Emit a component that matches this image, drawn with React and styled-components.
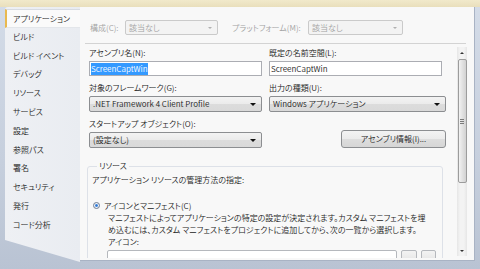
import React from "react";
import styled, { createGlobalStyle } from "styled-components";

const Global = createGlobalStyle`
  html, body { margin: 0; padding: 0; }
  body { font-family: "Noto Sans CJK JP", "Noto Sans", sans-serif; }
  * { box-sizing: border-box; }
`;

const Root = styled.div`
  width: 480px;
  height: 269px;
  overflow: hidden;
  background: linear-gradient(180deg, #d4dce8 0%, #c6cfdd 60%, #b9c3d3 100%);
  font-family: "Noto Sans CJK JP", "Noto Sans", sans-serif;
  font-size: 8px;
  font-weight: 350;
  font-feature-settings: "palt";
  color: #222;
`;

const TopStrip = styled.div`
  height: 7px;
  background: linear-gradient(180deg, #f1e9cb 0%, #e9dfbc 100%);
`;

const Main = styled.div`
  display: flex;
  align-items: flex-start;
  padding-left: 5px;
`;

const TabColumn = styled.div`
  width: 75px;
  height: 255px;
  padding-top: 2px;
  background: linear-gradient(90deg, #eef0f4 0%, #e9ecf1 100%);
  clip-path: polygon(0 0, 100% 0, 100% 100%, 0 91.4%);
  border-top-left-radius: 3px;
`;

const Tab = styled.div`
  height: 18.8px;
  line-height: 18px;
  padding-left: ${(p) => (p.$active ? "6px" : "8px")};
  white-space: nowrap;
  color: #262626;
  ${(p) =>
    p.$active &&
    `
    background: #fafafa;
    border-left: 2px solid #e9b94f;
    border-top: 1px solid #d7dbe2;
    border-bottom: 1px solid #e3e6ea;
  `}
`;

const ContentPanel = styled.div`
  width: 395px;
  height: 254px;
  background: #f8f8f8;
  border-right: 1px solid #a9b3c4;
  border-bottom: 1px solid #a9b3c4;
  display: flex;
  flex-direction: column;
`;

const TopBar = styled.div`
  height: 36px;
  padding: 13px 0 0 10px;
  display: flex;
  align-items: flex-start;
`;

const BarLabel = styled.div`
  width: ${(p) => p.$w}px;
  line-height: 15px;
  color: #a3a3a3;
  white-space: nowrap;
`;

const DisabledCombo = styled.div`
  width: ${(p) => p.$w}px;
  height: 15px;
  margin-right: ${(p) => p.$mr || 0}px;
  border: 1px solid #cacaca;
  border-radius: 2px;
  background: #f3f3f3;
  color: #a3a3a3;
  line-height: 13px;
  padding-left: 3px;
  display: flex;
  justify-content: space-between;
  align-items: center;
`;

const SmallArrow = styled.span`
  width: 0;
  height: 0;
  margin-right: 5px;
  border-left: 2px solid transparent;
  border-right: 2px solid transparent;
  border-top: 2px solid ${(p) => p.$c || "#b0b0b0"};
`;

const Separator = styled.div`
  height: 1px;
  margin: 0 8px 0 5px;
  background: #d3d3d3;
`;

const Body = styled.div`
  flex: 1;
  display: flex;
  min-height: 0;
`;

const FormArea = styled.div`
  width: 377px;
  height: 214px;
  overflow: hidden;
  padding: 4px 0 0 9px;
`;

const FieldGrid = styled.div`
  display: grid;
  grid-template-columns: 173px 177px;
  column-gap: 7px;
  row-gap: 7px;
`;

const Field = styled.div`
  display: flex;
  flex-direction: column;
  gap: 3px;
`;

const Label = styled.div`
  line-height: 10px;
  white-space: nowrap;
`;

const TextInput = styled.div`
  width: ${(p) => p.$w || 173}px;
  height: 15px;
  border: 1px solid #abadb3;
  background: #fff;
  line-height: 12px;
  padding: 1px 0 0 1px;
  white-space: nowrap;
`;

const Selected = styled.span`
  background: #3399ff;
  color: #fff;
  padding: 0 0 1px 0;
`;

const Combo = styled.div`
  width: ${(p) => p.$w || 173}px;
  height: 16px;
  border: 1px solid #8c8e91;
  border-radius: 2px;
  background: linear-gradient(180deg, #f3f3f3 0%, #ebebeb 50%, #dcdcdc 51%, #d9d9d9 100%);
  display: flex;
  align-items: center;
  justify-content: space-between;
  padding-left: 3px;
  line-height: 14px;
  white-space: nowrap;
`;

const BlackArrow = styled.span`
  width: 0;
  height: 0;
  margin-right: 5px;
  border-left: 3px solid transparent;
  border-right: 3px solid transparent;
  border-top: 3px solid #111;
`;

const ButtonCell = styled.div`
  display: flex;
  justify-content: flex-end;
  align-items: flex-end;
`;

const Button = styled.div`
  width: 105px;
  height: 18px;
  border: 1px solid #8c8e91;
  border-radius: 3px;
  background: linear-gradient(180deg, #f3f3f3 0%, #ebebeb 50%, #dddddd 51%, #d6d6d6 100%);
  text-align: center;
  line-height: 16px;
  white-space: nowrap;
`;

const GroupBox = styled.fieldset`
  margin: 13px 0 0 -2px;
  width: 356px;
  border: 1px solid #dde1e8;
  border-radius: 3px;
  padding: 0 0 20px 4px;
  min-width: 0;
`;

const Legend = styled.legend`
  margin-left: 5px;
  padding: 0 2px;
  line-height: 10px;
`;

const GroupText = styled.div`
  margin-top: 4px;
  line-height: 10px;
  white-space: nowrap;
`;

const RadioRow = styled.div`
  margin-top: 15px;
  display: flex;
  align-items: center;
  height: 10px;
  padding-left: 1px;
  white-space: nowrap;
`;

const Radio = styled.span`
  width: 7px;
  height: 7px;
  margin-right: 4px;
  border-radius: 50%;
  border: 1px solid #6d7b91;
  background: radial-gradient(circle, #2f76d0 0%, #4a8ee0 35%, #e9eef5 45%, #f7f9fb 100%);
`;

const Indented = styled.div`
  padding-left: 16px;
`;

const Desc = styled.div`
  margin-top: 2px;
  line-height: 12px;
  white-space: nowrap;
`;

const IconLabel = styled.div`
  margin-top: 1px;
  line-height: 10px;
`;

const IconRow = styled.div`
  margin-top: 3px;
  display: flex;
  gap: 4px;
  margin-left: -1px;
`;

const IconCombo = styled.div`
  width: ${(p) => p.$w}px;
  height: 16px;
  border: 1px solid #b5b8bd;
  border-radius: 2px;
  background: ${(p) => (p.$plain ? "#fff" : "linear-gradient(180deg,#f3f3f3,#e0e0e0)")};
`;

const Scrollbar = styled.div`
  width: 10px;
  height: 209px;
  margin: 3px 7px 0 0;
  background: linear-gradient(90deg, #e6e6e6 0%, #f3f3f3 30%, #f3f3f3 70%, #e6e6e6 100%);
  display: flex;
  flex-direction: column;
  align-items: center;
`;

const ArrowBox = styled.div`
  height: 11px;
  width: 10px;
  display: flex;
  align-items: center;
  justify-content: center;
`;

const UpTri = styled.span`
  width: 0;
  height: 0;
  border-left: 2px solid transparent;
  border-right: 2px solid transparent;
  border-bottom: 2px solid #333;
`;

const DownTri = styled.span`
  width: 0;
  height: 0;
  border-left: 2px solid transparent;
  border-right: 2px solid transparent;
  border-top: 2px solid #333;
`;

const Thumb = styled.div`
  margin-top: 1px;
  width: 9px;
  height: 124px;
  border: 1px solid #9c9c9c;
  border-radius: 2px;
  background: linear-gradient(90deg, #f2f2f2 0%, #e1e1e1 50%, #d2d2d2 100%);
  display: flex;
  align-items: center;
  justify-content: center;
`;

const Grip = styled.div`
  width: 4px;
  height: 5px;
  background: repeating-linear-gradient(180deg, #7a7a7a 0 1px, transparent 1px 2px);
`;

const TrackRest = styled.div`
  flex: 1;
`;

const tabs = [
  "アプリケーション",
  "ビルド",
  "ビルド イベント",
  "デバッグ",
  "リソース",
  "サービス",
  "設定",
  "参照パス",
  "署名",
  "セキュリティ",
  "発行",
  "コード分析",
];

export default function App() {
  return (
    <Root>
      <Global />
      <TopStrip />
      <Main>
        <TabColumn>
          {tabs.map((t, i) => (
            <Tab key={t} $active={i === 0}>
              {t}
            </Tab>
          ))}
        </TabColumn>
        <ContentPanel>
          <TopBar>
            <BarLabel $w={35}>構成(C):</BarLabel>
            <DisabledCombo $w={93} $mr={14}>
              該当なし
              <SmallArrow />
            </DisabledCombo>
            <BarLabel $w={76}>プラットフォーム(M):</BarLabel>
            <DisabledCombo $w={95}>
              該当なし
              <SmallArrow />
            </DisabledCombo>
          </TopBar>
          <Separator />
          <Body>
            <FormArea>
              <FieldGrid>
                <Field>
                  <Label>アセンブリ名(N):</Label>
                  <TextInput>
                    <Selected>ScreenCaptWin</Selected>
                  </TextInput>
                </Field>
                <Field>
                  <Label>既定の名前空間(L):</Label>
                  <TextInput $w={173}>ScreenCaptWin</TextInput>
                </Field>
                <Field>
                  <Label>対象のフレームワーク(G):</Label>
                  <Combo>
                    .NET Framework 4 Client Profile
                    <BlackArrow />
                  </Combo>
                </Field>
                <Field>
                  <Label>出力の種類(U):</Label>
                  <Combo $w={177}>
                    Windows アプリケーション
                    <BlackArrow />
                  </Combo>
                </Field>
                <Field>
                  <Label>スタートアップ オブジェクト(O):</Label>
                  <Combo>
                    (設定なし)
                    <BlackArrow />
                  </Combo>
                </Field>
                <ButtonCell>
                  <Button>アセンブリ情報(I)...</Button>
                </ButtonCell>
              </FieldGrid>
              <GroupBox>
                <Legend>リソース</Legend>
                <GroupText>アプリケーション リソースの管理方法の指定:</GroupText>
                <RadioRow>
                  <Radio />
                  アイコンとマニフェスト(C)
                </RadioRow>
                <Indented>
                  <Desc>
                    マニフェストによってアプリケーションの特定の設定が決定されます。カスタム マニフェストを埋
                    <br />
                    め込むには、カスタム マニフェストをプロジェクトに追加してから、次の一覧から選択します。
                  </Desc>
                  <IconLabel>アイコン:</IconLabel>
                  <IconRow>
                    <IconCombo $w={290} $plain />
                    <IconCombo $w={16} />
                    <IconCombo $w={15} />
                  </IconRow>
                </Indented>
              </GroupBox>
            </FormArea>
            <Scrollbar>
              <ArrowBox>
                <UpTri />
              </ArrowBox>
              <Thumb>
                <Grip />
              </Thumb>
              <TrackRest />
              <ArrowBox>
                <DownTri />
              </ArrowBox>
            </Scrollbar>
          </Body>
        </ContentPanel>
      </Main>
    </Root>
  );
}
